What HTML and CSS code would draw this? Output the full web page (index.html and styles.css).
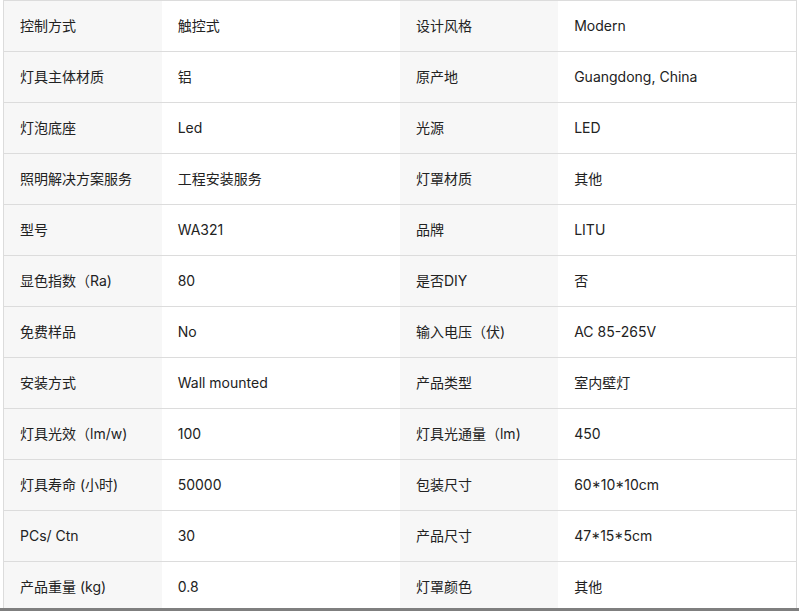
FILE: index.html
```html
<!DOCTYPE html>
<html lang="zh">
<head>
<meta charset="utf-8">
<link rel="stylesheet" href="styles.css">
</head>
<body>
<div class="frame">
<table class="spec">
<tbody>
<tr><td class="k">控制方式</td><td class="v">触控式</td><td class="k">设计风格</td><td class="v">Modern</td></tr>
<tr><td class="k">灯具主体材质</td><td class="v">铝</td><td class="k">原产地</td><td class="v">Guangdong, China</td></tr>
<tr><td class="k">灯泡底座</td><td class="v">Led</td><td class="k">光源</td><td class="v">LED</td></tr>
<tr><td class="k">照明解决方案服务</td><td class="v">工程安装服务</td><td class="k">灯罩材质</td><td class="v">其他</td></tr>
<tr><td class="k">型号</td><td class="v">WA321</td><td class="k">品牌</td><td class="v">LITU</td></tr>
<tr><td class="k">显色指数（Ra)</td><td class="v">80</td><td class="k">是否DIY</td><td class="v">否</td></tr>
<tr><td class="k">免费样品</td><td class="v">No</td><td class="k">输入电压（伏)</td><td class="v">AC 85-265V</td></tr>
<tr><td class="k">安装方式</td><td class="v">Wall mounted</td><td class="k">产品类型</td><td class="v">室内壁灯</td></tr>
<tr><td class="k">灯具光效（lm/w)</td><td class="v">100</td><td class="k">灯具光通量（lm)</td><td class="v">450</td></tr>
<tr><td class="k">灯具寿命 (小时)</td><td class="v">50000</td><td class="k">包装尺寸</td><td class="v">60*10*10cm</td></tr>
<tr><td class="k">PCs/ Ctn</td><td class="v">30</td><td class="k">产品尺寸</td><td class="v">47*15*5cm</td></tr>
<tr><td class="k">产品重量 (kg)</td><td class="v">0.8</td><td class="k">灯罩颜色</td><td class="v">其他</td></tr>
</tbody>
</table>
</div>
<div class="bar"></div>
</body>
</html>
```
FILE: styles.css
```css
html, body {
  margin: 0;
  padding: 0;
  background: #fff;
}
body {
  font-family: Inter, "Noto Sans CJK SC", sans-serif;
  font-size: 14px;
  color: #222;
}
.frame {
  height: 608px;
  overflow: hidden;
  padding-left: 3px;
}
.spec {
  border-collapse: collapse;
  width: 794px;
  table-layout: fixed;
  border: 1px solid #dcdcdc;
}
.spec td {
  height: 51px;
  padding: 0 16px;
  border-bottom: 1px solid #dcdcdc;
  box-sizing: border-box;
  vertical-align: middle;
  white-space: nowrap;
  line-height: 20px;
}
.spec td.k {
  width: 158px;
  background: #f7f7f7;
}
.spec td.v {
  width: 238px;
  background: #fff;
}
.bar {
  height: 3px;
  background: #7f7f7f;
}
```
